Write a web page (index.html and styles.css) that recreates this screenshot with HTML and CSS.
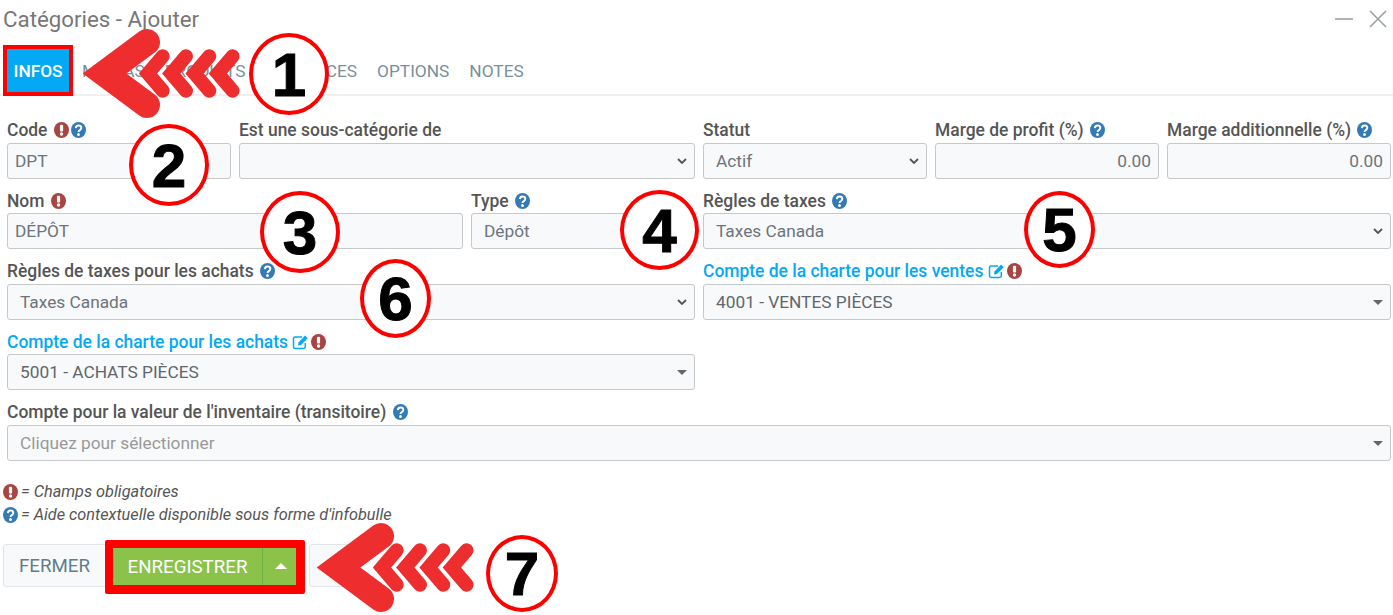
FILE: index.html
```html
<!DOCTYPE html>
<html lang="fr">
<head>
    <meta charset="UTF-8">
    <title>Catégories - Ajouter</title>
    <link rel="stylesheet" href="styles.css">
</head>
<body>
    <!-- shared icons -->
    <svg class="defs" width="0" height="0">
        <symbol id="ic-req" viewBox="0 0 16 16" preserveAspectRatio="none"><circle cx="8" cy="8" r="8" fill="#a94442"/><rect x="6.3" y="2.8" width="3.4" height="6.8" rx="1" fill="#fff"/><circle cx="8" cy="12" r="1.8" fill="#fff"/></symbol>
        <symbol id="ic-help" viewBox="0 0 16 16" preserveAspectRatio="none"><circle cx="8" cy="8" r="8" fill="#337ab7"/><path d="M5.1 6.2C5.3 4.5 6.5 3.6 8 3.6c1.7 0 3 1 3 2.4 0 2.1-3 2-3 3.9" fill="none" stroke="#fff" stroke-width="2"/><circle cx="8" cy="12.4" r="1.5" fill="#fff"/></symbol>
        <symbol id="ic-edit" viewBox="0 0 16 16"><path d="M12.8 9v3.8c0 1-.8 1.7-1.7 1.7H2.7c-1 0-1.7-.7-1.7-1.7V4.6c0-1 .7-1.7 1.7-1.7h7" fill="none" stroke="#03a9f4" stroke-width="1.5"/><path d="M6 8.4 12.6 1.6l2.6 2.6-6.7 6.8-3 .6z" fill="#03a9f4"/></symbol>
        <g id="callout-arrow" fill="none" stroke="#ee2e2e" stroke-linecap="round">
            <path d="M64 14 21.5 45.5 64 77" stroke-width="26"/>
            <g class="soft" stroke-width="14">
                <path d="M79.7 28.3 65 45.5l14.7 17.2"/>
                <path d="M103 28.3 88.3 45.5 103 62.7"/>
                <path d="M126.3 28.3 111.6 45.5l14.7 17.2"/>
                <path d="M149.6 28.3 134.9 45.5l14.7 17.2"/>
            </g>
        </g>
    </svg>

    <div class="modal">
        <header class="title-bar">
            <h1>Catégories - Ajouter</h1>
            <div class="window-btns">
                <svg width="18" height="18" viewBox="0 0 18 18"><path d="M0 9h18" stroke="#9aa0a3" stroke-width="1.6"/></svg>
                <svg width="18" height="18" viewBox="0 0 18 18"><path d="M1 1l16 16M17 1 1 17" stroke="#9aa0a3" stroke-width="1.6"/></svg>
            </div>
        </header>

        <nav class="tabs">
            <a class="tab active">INFOS</a>
            <a class="tab">MÉDIAS</a>
            <a class="tab">PRODUITS</a>
            <a class="tab">ANNONCES</a>
            <a class="tab">OPTIONS</a>
            <a class="tab">NOTES</a>
        </nav>

        <form class="form-grid">
            <div class="field col-2">
                <label>Code <svg class="ic"><use href="#ic-req"/></svg><svg class="ic"><use href="#ic-help"/></svg></label>
                <input class="ctl" value="DPT">
            </div>
            <div class="field col-4">
                <label>Est une sous-catégorie de</label>
                <select class="ctl"><option></option></select>
            </div>
            <div class="field col-2">
                <label>Statut</label>
                <select class="ctl"><option>Actif</option></select>
            </div>
            <div class="field col-2">
                <label>Marge de profit (%) <svg class="ic"><use href="#ic-help"/></svg></label>
                <input class="ctl num" value="0.00">
            </div>
            <div class="field col-2">
                <label>Marge additionnelle (%) <svg class="ic"><use href="#ic-help"/></svg></label>
                <input class="ctl num" value="0.00">
            </div>

            <div class="field col-4">
                <label>Nom <svg class="ic"><use href="#ic-req"/></svg></label>
                <input class="ctl" value="DÉPÔT">
            </div>
            <div class="field col-2">
                <label>Type <svg class="ic"><use href="#ic-help"/></svg></label>
                <select class="ctl"><option>Dépôt</option></select>
            </div>
            <div class="field col-6">
                <label>Règles de taxes <svg class="ic"><use href="#ic-help"/></svg></label>
                <select class="ctl"><option>Taxes Canada</option></select>
            </div>

            <div class="field col-6">
                <label>Règles de taxes pour les achats <svg class="ic"><use href="#ic-help"/></svg></label>
                <select class="ctl"><option>Taxes Canada</option></select>
            </div>
            <div class="field col-6">
                <label class="link">Compte de la charte pour les ventes <svg class="ic ic-edit"><use href="#ic-edit"/></svg><svg class="ic"><use href="#ic-req"/></svg></label>
                <div class="ctl picker">4001 - VENTES PIÈCES</div>
            </div>

            <div class="field col-6">
                <label class="link">Compte de la charte pour les achats <svg class="ic ic-edit"><use href="#ic-edit"/></svg><svg class="ic"><use href="#ic-req"/></svg></label>
                <div class="ctl picker">5001 - ACHATS PIÈCES</div>
            </div>
            <div class="col-6"></div>

            <div class="field col-12">
                <label>Compte pour la valeur de l'inventaire (transitoire) <svg class="ic"><use href="#ic-help"/></svg></label>
                <div class="ctl picker placeholder">Cliquez pour sélectionner</div>
            </div>
        </form>

        <div class="legend">
            <p><svg class="ic"><use href="#ic-req"/></svg>= Champs obligatoires</p>
            <p><svg class="ic"><use href="#ic-help"/></svg>= Aide contextuelle disponible sous forme d'infobulle</p>
        </div>

        <footer class="actions">
            <button class="btn btn-close" type="button">FERMER</button>
            <div class="save-group">
                <button class="btn-save" type="button">ENREGISTRER</button>
                <button class="btn-caret" type="button" aria-label="Plus"></button>
            </div>
            <button class="btn btn-ok" type="button">OK</button>
        </footer>
    </div>

    <!-- annotations painted over the screenshot -->
    <svg class="arrow arrow-top" width="165" height="92" viewBox="0 0 165 92"><use href="#callout-arrow"/></svg>
    <svg class="arrow arrow-bottom" width="165" height="92" viewBox="0 0 165 92"><use href="#callout-arrow"/></svg>
    <span class="mark m1">1</span>
    <span class="mark m2">2</span>
    <span class="mark m3">3</span>
    <span class="mark m4">4</span>
    <span class="mark m5">5</span>
    <span class="mark m6">6</span>
    <span class="mark m7">7</span>
</body>
</html>
```
FILE: styles.css
```css
* {
    box-sizing: border-box;
}

html, body {
    margin: 0;
    height: 100%;
    overflow: hidden;
}

body {
    position: relative;
    background-color: #fff;
    font-family: Roboto, sans-serif;
    font-size: 17.45px;
    color: #495057;
}

.defs {
    position: absolute;
}

/* Title + tabs */
.title-bar {
    display: flex;
    justify-content: space-between;
    align-items: center;
    height: 38px;
    padding: 0 6px 0 3px;
}

h1 {
    margin: 0;
    font-size: 22.3px;
    font-weight: 400;
    color: #777;
}

.window-btns {
    display: flex;
    gap: 16px;
}

.tabs {
    display: flex;
    gap: 20px;
    height: 58px;
    padding: 11px 0 2px 7px;
    border-bottom: 2px solid #eef0f2;
}

.tab {
    padding-top: 1px;
    line-height: 42px;
    font-size: 17.3px;
    color: #78909c;
}

.tab.active {
    padding: 1px 6.5px 0;
    margin-right: -7px;
    background-color: #03a9f4;
    color: #fff;
    font-weight: 500;
    outline: 4px solid #f00;
}

/* Form */
.form-grid {
    display: grid;
    grid-template-columns: repeat(12, 1fr);
    column-gap: 8px;
    row-gap: 14px;
    padding: 0 2px 0 7px;
    margin-top: 26.4px;
}

.col-2 { grid-column: span 2; }
.col-4 { grid-column: span 4; }
.col-6 { grid-column: span 6; }
.col-12 { grid-column: span 12; }

.field label {
    display: flex;
    align-items: flex-start;
    height: 20.5px;
    line-height: 16px;
    font-weight: 500;
    color: #555;
    white-space: pre;
}

.field label.link {
    color: #03a9f4;
}

.ic {
    width: 15px;
    height: 16px;
    margin-left: 2px;
    flex: none;
}

.ic-edit {
    width: 17px;
    margin-left: 0;
}

.ctl {
    display: block;
    width: 100%;
    height: 36px;
    padding: 0 7px;
    border: 1px solid #c6c8ca;
    border-radius: 3px;
    background-color: #f8f9fa;
    font-family: Roboto, sans-serif;
    font-size: 17.3px;
    color: #6c757d;
}

select.ctl {
    padding-left: 12px;
    appearance: none;
    background-image: url("data:image/svg+xml,%3Csvg xmlns='http://www.w3.org/2000/svg' width='10' height='6' viewBox='0 0 10 6'%3E%3Cpath d='M1 1l4 4 4-4' fill='none' stroke='%23555' stroke-width='1.8'/%3E%3C/svg%3E");
    background-repeat: no-repeat;
    background-position: right 7px center;
}

.num {
    text-align: right;
}

.picker {
    position: relative;
    padding-left: 12px;
    line-height: 35px;
    color: #5f676d;
}

.picker::after {
    content: "";
    position: absolute;
    right: 7px;
    top: 15px;
    border: 5px solid transparent;
    border-top-color: #666;
    border-bottom-width: 0;
}

.placeholder {
    color: #999;
}

/* Legend + buttons */
.legend {
    margin-top: 19.5px;
    padding-left: 1px;
    font-size: 16.3px;
    font-style: italic;
    color: #555;
}

.legend p {
    display: flex;
    align-items: center;
    gap: 3px;
    height: 23px;
    margin: 0;
    white-space: pre;
}

.actions {
    display: flex;
    align-items: flex-start;
    gap: 4px;
    margin-top: 14px;
    padding-left: 3px;
}

.btn {
    height: 43px;
    margin-top: 4px;
    border: 1px solid #e3e6e8;
    border-radius: 3px;
    background-color: #f8f9fa;
    font-family: Roboto, sans-serif;
    font-size: 18.7px;
    color: #607d8b;
}

.btn-close {
    width: 106px;
    padding: 0 0 0 15px;
    text-align: left;
}

.btn-ok {
    width: 49px;
    padding: 0 0 0 17px;
    text-align: left;
}

.save-group {
    position: relative;
    display: flex;
    height: 54px;
    margin-left: -8px;
    border: solid #f00;
    border-width: 8px 9px 9px 8px;
    border-radius: 2px;
}

.btn-save, .btn-caret {
    border: 0;
    background-color: #8bc34a;
    color: #fff;
    font-family: Roboto, sans-serif;
    font-size: 18.7px;
}

.btn-save {
    width: 149px;
    padding: 0;
}

.btn-caret {
    position: relative;
    width: 34px;
    border-left: 1px solid #6fb04a;
}

.btn-caret::after {
    content: "";
    position: absolute;
    left: 12px;
    top: 15px;
    border: 6px solid transparent;
    border-bottom-color: #fff;
    border-top-width: 0;
}

/* Annotations */
.arrow {
    position: absolute;
}

.arrow-top {
    left: 83px;
    top: 28px;
}

.arrow-bottom {
    left: 317px;
    top: 522px;
}

.soft {
    filter: blur(0.5px);
}

.mark {
    position: absolute;
    display: flex;
    align-items: center;
    justify-content: center;
    width: 80px;
    height: 82px;
    border: 4px solid #f00;
    border-radius: 50%;
    background-color: #fff;
    font-family: "Liberation Sans", sans-serif;
    font-size: 62px;
    font-weight: 700;
    color: #000;
    -webkit-text-stroke: 1px #000;
}

.m1 { left: 249px; top: 33px; }
.m2 { left: 129px; top: 124px; }
.m3 { left: 260px; top: 191px; }
.m4 { left: 620px; top: 190px; width: 79px; height: 80px; }
.m5 { left: 1024px; top: 191px; width: 71px; height: 77px; }
.m6 { left: 360px; top: 259px; width: 71px; height: 79px; }
.m7 { left: 486px; top: 535px; width: 72px; height: 77px; }
```
